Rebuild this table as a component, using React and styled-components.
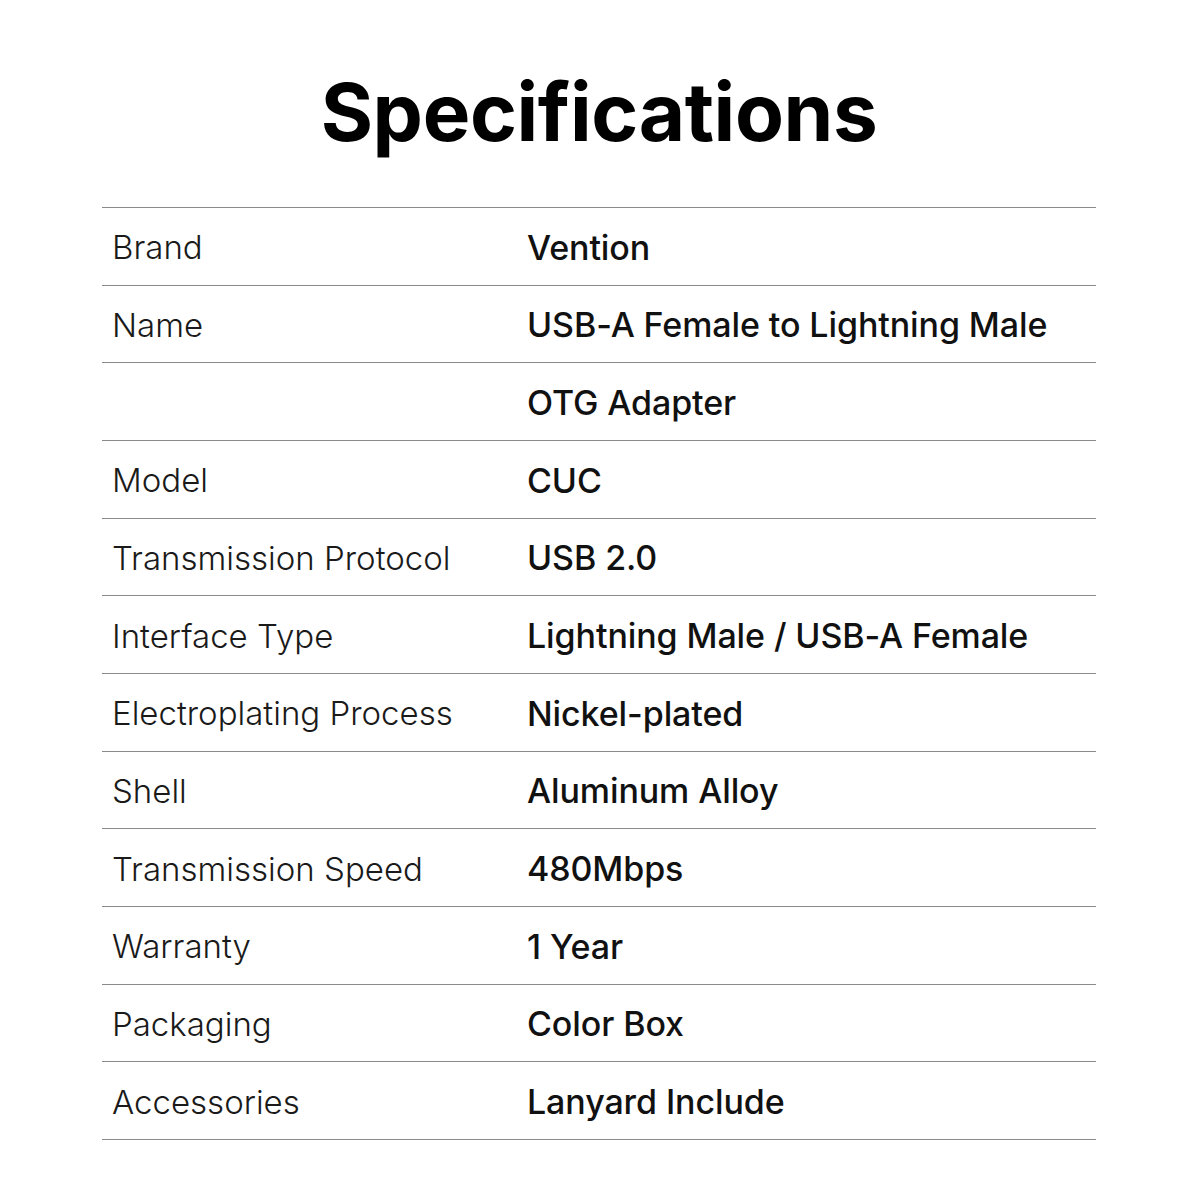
import React from "react";
import styled, { createGlobalStyle } from "styled-components";

const Global = createGlobalStyle`
  html, body { margin: 0; padding: 0; background: #fff; }
  body { font-family: Inter, "Noto Sans", sans-serif; color: #111; }
`;

const Page = styled.div`
  width: 1200px;
  height: 1200px;
  box-sizing: border-box;
  padding: 0 104px 0 102px;
  display: flex;
  flex-direction: column;
`;

const Title = styled.h1`
  margin: 0;
  height: 207px;
  display: flex;
  align-items: center;
  justify-content: center;
  padding-top: 16px;
  box-sizing: border-box;
  font-family: Inter, sans-serif;
  font-weight: 700;
  font-size: 80px;
  letter-spacing: -0.4px;
  color: #000;
`;

const Table = styled.div`
  display: flex;
  flex-direction: column;
  border-bottom: 1.5px solid #8a8a8a;
`;

const Row = styled.div`
  height: 77.67px;
  box-sizing: border-box;
  border-top: 1.5px solid #8a8a8a;
  display: grid;
  grid-template-columns: 415px 1fr;
  align-items: center;
  padding-left: 10px;
  padding-top: 2px;
`;

const Label = styled.div`
  font-family: Inter, sans-serif;
  font-weight: 300;
  font-size: 33px;
  color: #1a1a1a;
`;

const Value = styled.div`
  font-family: Inter, sans-serif;
  font-weight: 450;
  font-size: 34px;
  letter-spacing: -0.1px;
  color: #111;
`;

const rows = [
  ["Brand", "Vention"],
  ["Name", "USB-A Female to Lightning Male"],
  ["", "OTG Adapter"],
  ["Model", "CUC"],
  ["Transmission Protocol", "USB 2.0"],
  ["Interface Type", "Lightning Male / USB-A Female"],
  ["Electroplating Process", "Nickel-plated"],
  ["Shell", "Aluminum Alloy"],
  ["Transmission Speed", "480Mbps"],
  ["Warranty", "1 Year"],
  ["Packaging", "Color Box"],
  ["Accessories", "Lanyard Include"],
];

export default function App() {
  return (
    <>
      <Global />
      <Page>
        <Title>Specifications</Title>
        <Table>
          {rows.map(([l, v], i) => (
            <Row key={i}>
              <Label>{l}</Label>
              <Value>{v}</Value>
            </Row>
          ))}
        </Table>
      </Page>
    </>
  );
}
